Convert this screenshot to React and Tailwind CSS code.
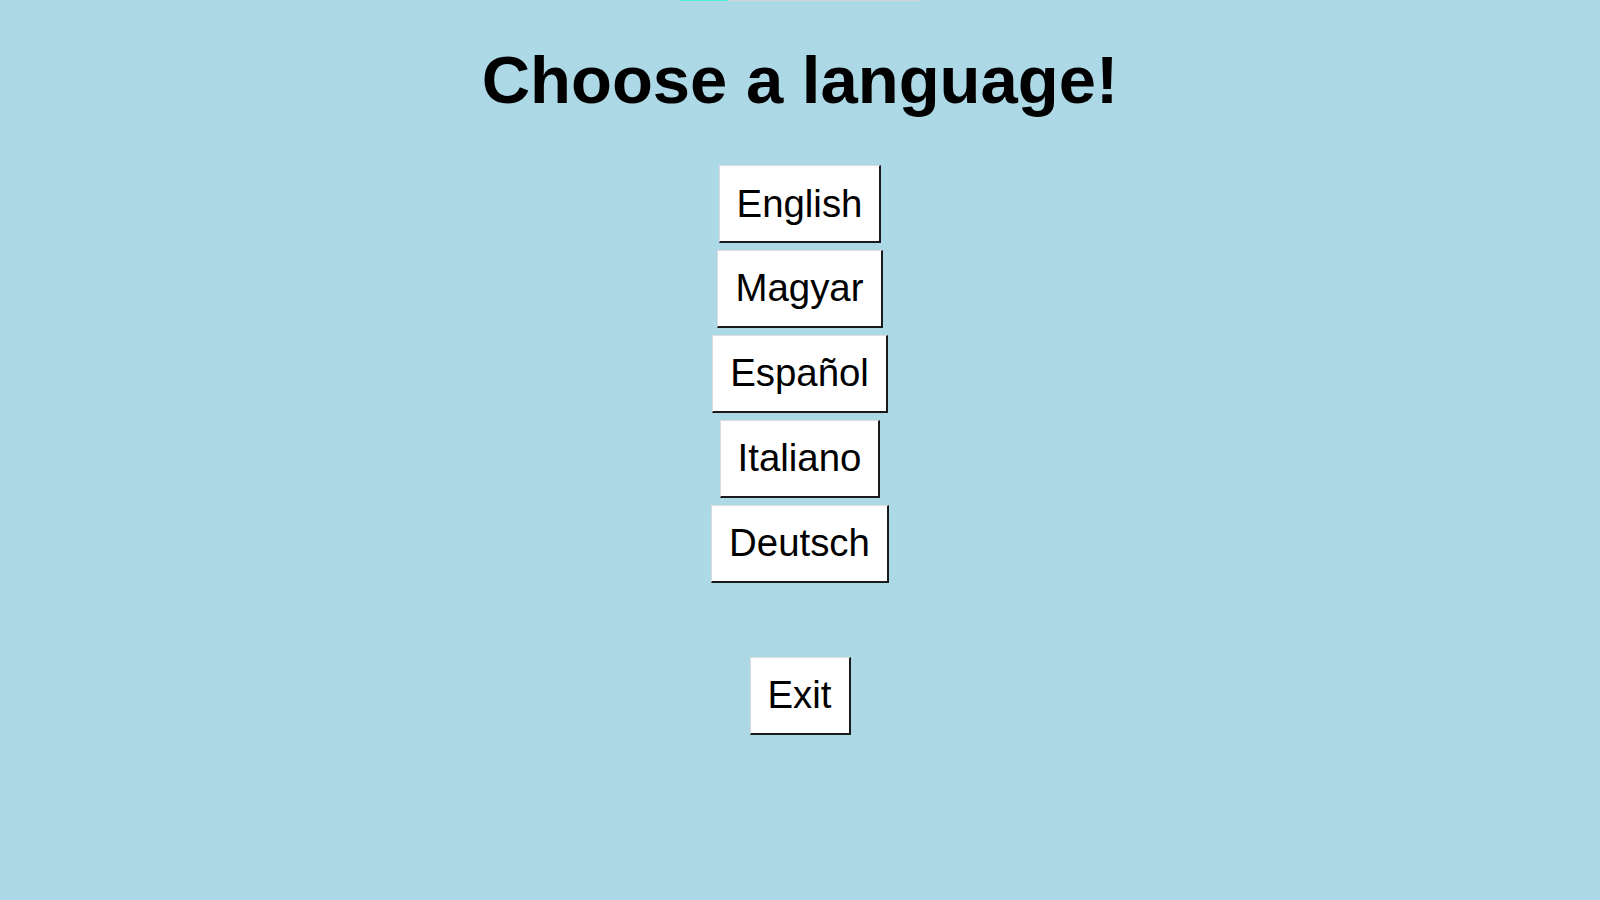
import React from "react";

const langs = ["English", "Magyar", "Español", "Italiano", "Deutsch"];

function Btn({ children }) {
  return (
    <button
      className="bg-white text-black text-[38.4px] leading-[normal] px-[17px] py-[15.6px] border-solid border-t border-l border-r-2 border-b-2 border-t-[#dcdcdc] border-l-[#dcdcdc] border-r-[#1a1a1a] border-b-[#1a1a1a] cursor-pointer"
      style={{ fontFamily: '"Liberation Sans", Arial, sans-serif' }}
    >
      {children}
    </button>
  );
}

export default function App() {
  return (
    <div
      className="min-h-[900px] w-full bg-[#add8e6] flex flex-col items-center"
      style={{ fontFamily: '"Liberation Sans", Arial, sans-serif' }}
    >
      <div className="h-px w-[241px] bg-[#d3d3d3] flex">
        <div className="h-px w-[48px] bg-[#4ff5d2]" />
      </div>
      <h1 className="mt-[40px] text-[67px] font-bold leading-[normal] text-black">
        Choose a language!
      </h1>
      <div className="mt-[47px] flex flex-col items-center gap-[6.7px]">
        {langs.map((l) => (
          <Btn key={l}>{l}</Btn>
        ))}
      </div>
      <div className="mt-[74px]">
        <Btn>Exit</Btn>
      </div>
    </div>
  );
}
